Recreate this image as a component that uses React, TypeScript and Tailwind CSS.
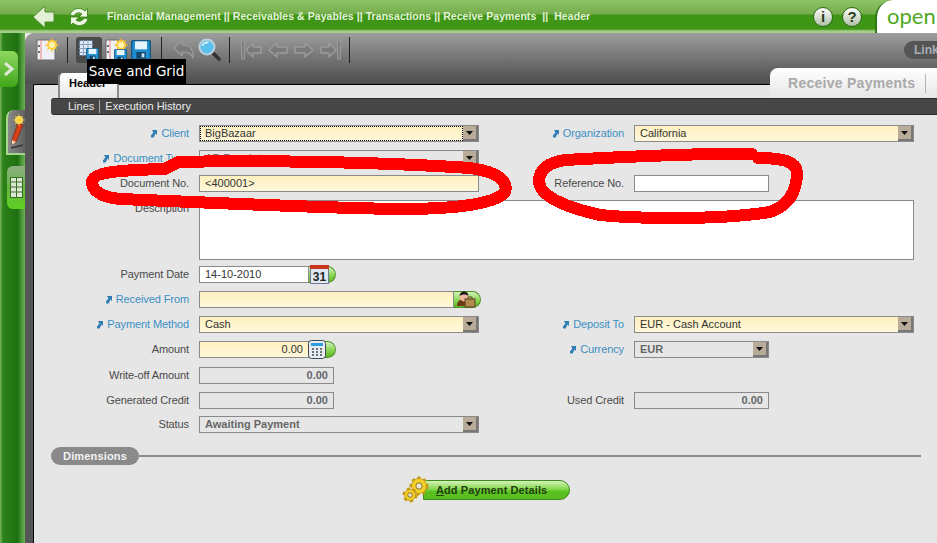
import React from "react";

const LinkMark = () => (
  <svg width="8" height="9" viewBox="0 0 8 9" className="mr-[3px] shrink-0">
    <path d="M2 1h5v5L5.6 4.6 3.6 8.4H1.2L0.9 6.6 3.4 3.4z" fill="#2f7fb5" />
  </svg>
);

const Label = ({ text, link, w }: { text: string; link?: boolean; w: string }) => (
  <div className={`${w} shrink-0 flex items-center justify-end h-[17px] text-[11px] tracking-[-0.1px] whitespace-nowrap ${link ? "text-[#3b8fc4]" : "text-[#4a4a4a]"}`}>
    {link && <LinkMark />}
    {text}
  </div>
);

const SelectBtn = () => (
  <span className="absolute right-0 top-0 bottom-0 w-[15px] flex items-center justify-center bg-[#b8ab98] border-r-2 border-b-2 border-[#777]">
    <svg width="7" height="4" viewBox="0 0 7 4"><path d="M0 0h7L3.5 4z" fill="#111" /></svg>
  </span>
);

const Field = ({ text, w, kind = "req", right, select, bold, focus }: { text?: string; w: string; kind?: "req" | "plain" | "ro"; right?: boolean; select?: boolean; bold?: boolean; focus?: boolean }) => (
  <div className={`relative ${w} h-[17px] shrink-0 border border-[#8a8a8a] flex items-center px-[5px] text-[11px] whitespace-nowrap overflow-hidden ${right ? "justify-end" : ""} ${kind === "req" ? "bg-gradient-to-b from-[#fff0c0] to-[#fff8da] text-[#333]" : kind === "plain" ? "bg-white text-[#333]" : "bg-[#e6e6e6] text-[#666]"} ${bold ? "font-bold" : ""}`}>
    <span>{text}</span>
    {focus && <span className="absolute left-0 top-0 bottom-0 right-[15px] border border-dotted border-black" />}
    {select && <SelectBtn />}
  </div>
);

const GreenPill = ({ children }: { children: React.ReactNode }) => (
  <div className="relative w-[27px] h-[17px] shrink-0 rounded-r-full bg-gradient-to-b from-[#d4f0b8] via-[#8ed85a] to-[#58b81c] border border-l-0 border-[#4f8f2a]">
    {children}
  </div>
);

const Row = ({ children, h = "h-[25px]" }: { children: React.ReactNode; h?: string }) => (
  <div className={`flex items-start ${h}`}>{children}</div>
);

const Arrow = ({ flip, bar }: { flip?: boolean; bar?: boolean }) => (
  <svg width="22" height="22" viewBox="0 0 22 22" style={{ transform: flip ? "scaleX(-1)" : undefined }}>
    {bar && <rect x="0.5" y="2" width="3" height="18" fill="#7f7f7f" stroke="#989898" />}
    <path d={bar ? "M5 11l7-7v4h8v6h-8v4z" : "M2 11l8-7v4h10v6H10v4z"} fill="#7a7a7a" stroke="#9c9c9c" strokeWidth="1.4" strokeLinejoin="round" />
  </svg>
);

const DocIcon = () => (
  <svg width="24" height="24" viewBox="0 0 24 24">
    <path d="M1 2h12l6 6v14H1z" fill="#eef0f6" stroke="#6a6a6a" />
    <path d="M5 2v20" stroke="#e88" />
    <circle cx="3" cy="8" r="0.9" fill="#333" /><circle cx="3" cy="14" r="0.9" fill="#333" />
    <circle cx="16" cy="7" r="5" fill="#ffd84a" />
    <path d="M16 0v14M9 7h14M11 2l10 10M21 2L11 12" stroke="#f5b81f" strokeWidth="1" />
    <circle cx="16" cy="7" r="3" fill="#fff3b0" />
  </svg>
);

const Disk = ({ size = 15 }: { size?: number }) => (
  <svg width={size} height={size} viewBox="0 0 15 15">
    <rect x="0.5" y="0.5" width="14" height="14" rx="1" fill="#1f8fd0" stroke="#16557f" />
    <rect x="3" y="1" width="9" height="6" fill="#e8f4fb" />
    <rect x="4" y="9" width="7" height="5" fill="#17486c" />
    <rect x="8" y="10" width="2" height="3" fill="#cfe6f5" />
  </svg>
);

const Sep = () => <div className="w-px h-[26px] bg-[#222] shrink-0" />;

const Gear = ({ x, y, r }: { x: number; y: number; r: number }) => (
  <g>
    <circle cx={x} cy={y} r={r} fill="#f2c81e" stroke="#c79a12" strokeWidth="4" strokeDasharray="3 2.6" />
    <circle cx={x} cy={y} r={r} fill="#f4cf2a" stroke="#a5830f" strokeWidth="0.6" />
    <circle cx={x} cy={y} r={r * 0.42} fill="#e9e4d0" stroke="#6f5a10" strokeWidth="0.8" />
  </g>
);

export default function App() {
  return (
    <div className="relative w-[937px] h-[543px] overflow-hidden flex flex-col bg-[#e6e6e6] font-['Liberation_Sans',Arial,sans-serif]">
      {/* Header */}
      <header className="relative h-[33px] shrink-0 flex items-center bg-[linear-gradient(#8fc466_0,#74ad4c_14px,#3f9516_15px,#3f9516_29px,#a6cf8c_31px,#a6cf8c_33px)]">
        <svg width="24" height="26" viewBox="0 0 24 26" className="ml-[32px] shrink-0">
          <path d="M1 13L13 2v6h9v10h-9v6z" fill="#e2f0d6" stroke="#4e8d2e" strokeWidth="1" strokeLinejoin="round" />
        </svg>
        <svg width="22" height="22" viewBox="0 0 22 22" className="ml-[12px] shrink-0">
          <path d="M2 9a9 9 0 0 1 15-4l2.5-2.5V11h-8.5l3-3A5 5 0 0 0 6 10z" fill="#eef7e6" stroke="#3f8a1e" strokeWidth="0.9" />
          <path d="M20 13a9 9 0 0 1-15 4l-2.5 2.5V11H11l-3 3a5 5 0 0 0 8-2z" fill="#eef7e6" stroke="#3f8a1e" strokeWidth="0.9" />
        </svg>
        <div className="ml-[17px] text-[10.5px] font-bold tracking-[0.06px] text-[#e4f2da] whitespace-pre">
          Financial Management || Receivables &amp; Payables || Transactions || Receive Payments  ||  Header
        </div>
        <div className="ml-auto flex items-center gap-[9px]">
          <div className="w-[20px] h-[20px] rounded-full bg-gradient-to-b from-white to-[#aebfa5] border border-[#2c6a12] flex items-center justify-center text-[15px] font-bold leading-none text-[#2a3a22]">i</div>
          <div className="w-[20px] h-[20px] rounded-full bg-gradient-to-b from-white to-[#aebfa5] border border-[#2c6a12] flex items-center justify-center text-[15px] font-bold leading-none text-[#2a3a22]">?</div>
        </div>
        <div className="ml-[13px] w-[62px] h-[33px] bg-white rounded-tl-[18px] border-l-2 border-[#2f7a14] pl-[10px] overflow-hidden whitespace-nowrap text-[22px] leading-[31px] text-[#4fa81f] font-['Lato',sans-serif]">
          open
        </div>
      </header>

      <div className="flex-1 flex min-h-0">
        {/* Left rail */}
        <aside className="w-[25px] shrink-0 flex flex-col items-start bg-[linear-gradient(to_right,#7cb562,#2d8218_3px,#1f7012_70%,#6cb352)]">
          <div className="mt-[18px] w-[18px] h-[36px] rounded-r-md bg-gradient-to-b from-[#8ed85e] to-[#3ea514] flex items-center justify-center">
            <svg width="12" height="14" viewBox="0 0 12 14"><path d="M2 1l7 6-7 6" fill="none" stroke="#dfe7d6" strokeWidth="3" /></svg>
          </div>
          <div className="mt-[23px] ml-[6px] w-[19px] h-[45px] rounded-tl-lg bg-gradient-to-r from-[#8a8a8a] to-[#5f5f5f] border-l-2 border-b-2 border-[#a7d78e] flex items-center justify-center">
            <svg width="16" height="36" viewBox="0 0 16 36">
              <path d="M9 9l5 2-7 17-4 3 0-5z" fill="#d8401a" stroke="#7a200a" strokeWidth="0.7" />
              <path d="M3 26l4 2-4 3z" fill="#eed9b0" />
              <path d="M2 34l12-3" stroke="#333" strokeWidth="1.6" />
              <circle cx="10" cy="6" r="4" fill="#ffe46a" />
              <path d="M10 0v12M4 6h12M6 2l8 8M14 2l-8 8" stroke="#f7c62b" strokeWidth="0.8" />
            </svg>
          </div>
          <div className="mt-[11px] ml-[7px] w-[18px] h-[43px] rounded-l-md bg-gradient-to-b from-[#8fae84] via-[#66b83c] to-[#5ed11f] flex items-center justify-center">
            <svg width="13" height="21" viewBox="0 0 13 21">
              <rect x="0.5" y="0.5" width="12" height="20" fill="#dbe9d2" stroke="#3a6a2a" />
              <path d="M0 5h13M0 10h13M0 15h13M6.5 0v21" stroke="#3a6a2a" />
            </svg>
          </div>
        </aside>

        {/* Main */}
        <main className="flex-1 min-w-0 flex flex-col bg-[#555] rounded-tl-[10px] overflow-hidden">
          <div className="h-[51px] shrink-0 flex items-center bg-gradient-to-b from-[#9e9e9e] to-[#4d4d4d] pb-[17px]">
            <div className="ml-[11px] shrink-0"><DocIcon /></div>
            <div className="ml-[7px]"><Sep /></div>
            <div className="relative ml-[8px] w-[26px] h-[26px] rounded-[3px] bg-[#4a4a4a] shrink-0">
              <svg width="14" height="16" viewBox="0 0 14 16" className="absolute left-[3px] top-[3px]">
                <rect x="0.5" y="0.5" width="13" height="15" fill="#dfe8f4" stroke="#5d6f8a" />
                <path d="M0 4.5h14M0 8.5h14M0 12.5h14M4.5 0v16M9 0v16" stroke="#8ca2c2" />
              </svg>
              <span className="absolute right-[3px] bottom-[2px] flex"><Disk size={13} /></span>
            </div>
            <div className="relative ml-[3px] w-[22px] h-[24px] shrink-0">
              <DocIcon />
              <span className="absolute right-0 bottom-0 flex"><Disk size={13} /></span>
            </div>
            <div className="ml-[4px] flex shrink-0"><Disk size={20} /></div>
            <div className="ml-[10px]"><Sep /></div>
            <svg width="22" height="20" viewBox="0 0 22 20" className="ml-[11px] shrink-0">
              <path d="M1 8l8-7v4c7 0 12 3 11 13-2-5-5-6-11-6v4z" fill="#7a7a7a" stroke="#9c9c9c" strokeWidth="1.2" strokeLinejoin="round" />
            </svg>
            <svg width="24" height="24" viewBox="0 0 24 24" className="ml-[3px] shrink-0">
              <path d="M14 14l7 7" stroke="#333" strokeWidth="3.6" strokeLinecap="round" />
              <circle cx="9" cy="9" r="7.5" fill="#5cc0ee" stroke="#bcd3de" strokeWidth="2" />
              <path d="M4.5 8a5 4 0 0 1 6-3.5" stroke="#e6f6fd" strokeWidth="1.6" fill="none" />
            </svg>
            <div className="ml-[7px]"><Sep /></div>
            <div className="ml-[11px] flex shrink-0"><Arrow bar /></div>
            <div className="ml-[4px] flex shrink-0"><Arrow /></div>
            <div className="ml-[4px] flex shrink-0"><Arrow flip /></div>
            <div className="ml-[4px] flex shrink-0"><Arrow flip bar /></div>
            <div className="ml-[8px]"><Sep /></div>
            <div className="ml-auto h-[18px] w-[34px] -mr-[1px] rounded-l-full bg-[#555] pl-[10px] text-[12px] font-bold leading-[18px] text-[#a8aeb8] overflow-hidden">Link</div>
          </div>

          <div className="flex-1 min-h-0 pl-[8px]">
            <div className="h-full bg-[#e6e6e6] border-l border-t border-black rounded-tl-[2px] flex flex-col">
              {/* Tab strip */}
              <div className="h-[13px] shrink-0 flex items-end">
                <div className="relative ml-[24px] h-[25px] w-[61px] bg-gradient-to-b from-white to-[#e6e6e6] border-x-2 border-[#8c8c8c] rounded-tl-[5px] pl-[9px] pt-[2px] text-[11px] font-bold text-black">Header</div>
                <div className="relative ml-auto h-[30px] w-[167px] bg-gradient-to-b from-white to-[#e6e6e6] rounded-tl-[8px] flex items-center">
                  <span className="ml-[18px] text-[14px] font-bold text-[#a9a9a9] tracking-[0.27px] whitespace-nowrap">Receive Payments</span>
                  <span className="ml-[10px] w-px h-[19px] bg-[#b5b5b5]" />
                </div>
              </div>

              {/* Sub tabs */}
              <div className="ml-[17px] h-[17px] shrink-0 rounded-l-[3px] bg-[#464646] border-y border-[#2c2c2c] flex items-center text-[11px] text-[#ececec]">
                <span className="ml-[17px]">Lines</span>
                <span className="ml-[5px] w-px h-[13px] bg-[#aaa]" />
                <span className="ml-[5px]">Execution History</span>
              </div>

              {/* Form */}
              <div className="pt-[10px] flex flex-col">
                <Row>
                  <Label text="Client" link w="w-[155px]" />
                  <div className="ml-[10px]"><Field text="BigBazaar" w="w-[280px]" select focus /></div>
                  <Label text="Organization" link w="w-[145px]" />
                  <div className="ml-[10px]"><Field text="California" w="w-[280px]" select /></div>
                </Row>
                <Row>
                  <Label text="Document Type" link w="w-[155px]" />
                  <div className="ml-[10px]"><Field text="AR Receipt" w="w-[280px]" kind="ro" select /></div>
                </Row>
                <Row>
                  <Label text="Document No." w="w-[155px]" />
                  <div className="ml-[10px]"><Field text="<400001>" w="w-[280px]" /></div>
                  <Label text="Reference No." w="w-[145px]" />
                  <div className="ml-[10px]"><Field w="w-[135px]" kind="plain" /></div>
                </Row>
                <Row h="h-[66px]">
                  <Label text="Description" w="w-[155px]" />
                  <div className="ml-[10px] w-[715px] h-[60px] bg-white border border-[#8a8a8a]" />
                </Row>
                <Row>
                  <Label text="Payment Date" w="w-[155px]" />
                  <div className="ml-[10px] flex">
                    <Field text="14-10-2010" w="w-[110px]" kind="plain" />
                    <GreenPill>
                      <svg width="19" height="20" viewBox="0 0 19 20" className="absolute left-[1px] -top-[2px]">
                        <rect x="0.5" y="0.5" width="18" height="18" fill="#dfe7f2" stroke="#6d7c90" />
                        <rect x="0" y="0" width="19" height="4" fill="#c8341c" />
                        <text x="9.5" y="15.5" textAnchor="middle" fontSize="12" fontWeight="700" fontFamily="Liberation Sans" fill="#222">31</text>
                      </svg>
                    </GreenPill>
                  </div>
                </Row>
                <Row>
                  <Label text="Received From" link w="w-[155px]" />
                  <div className="ml-[10px] flex">
                    <Field w="w-[255px]" />
                    <GreenPill>
                      <svg width="20" height="17" viewBox="0 0 20 17" className="absolute left-[2px] -top-[1px]">
                        <path d="M1 15c0-5 3-7 7-7s6 2 6 7z" fill="#6a3c14" />
                        <circle cx="8" cy="6" r="4.4" fill="#f0b7a0" />
                        <path d="M3.5 5a4.5 4.5 0 0 1 9 0c-2-2-6-2-9 0z" fill="#1c1c1c" />
                        <rect x="9" y="8" width="10" height="8" fill="#b08a4e" stroke="#5c4320" />
                        <path d="M12 8V6h4v2" fill="none" stroke="#5c4320" />
                      </svg>
                    </GreenPill>
                  </div>
                </Row>
                <Row>
                  <Label text="Payment Method" link w="w-[155px]" />
                  <div className="ml-[10px]"><Field text="Cash" w="w-[280px]" select /></div>
                  <Label text="Deposit To" link w="w-[145px]" />
                  <div className="ml-[10px]"><Field text="EUR - Cash Account" w="w-[280px]" select /></div>
                </Row>
                <Row h="h-[26px]">
                  <Label text="Amount" w="w-[155px]" />
                  <div className="ml-[10px] flex">
                    <Field text="0.00" w="w-[110px]" right />
                    <GreenPill>
                      <svg width="18" height="19" viewBox="0 0 18 19" className="absolute -left-[1px] -top-[2px]">
                        <rect x="0.5" y="0.5" width="17" height="18" rx="3" fill="#e8ecf0" stroke="#3d4a58" />
                        <rect x="3" y="3" width="12" height="3" fill="#2d9be0" />
                        <path d="M4 9h2M8 9h2M12 9h2M4 12h2M8 12h2M12 12h2M4 15h2M8 15h2M12 15h2" stroke="#3d4a58" strokeWidth="1.6" />
                      </svg>
                    </GreenPill>
                  </div>
                  <Label text="Currency" link w="w-[288px]" />
                  <div className="ml-[10px]"><Field text="EUR" w="w-[135px]" kind="ro" bold select /></div>
                </Row>
                <Row>
                  <Label text="Write-off Amount" w="w-[155px]" />
                  <div className="ml-[10px]"><Field text="0.00" w="w-[135px]" kind="ro" right bold /></div>
                </Row>
                <Row h="h-[24px]">
                  <Label text="Generated Credit" w="w-[155px]" />
                  <div className="ml-[10px]"><Field text="0.00" w="w-[135px]" kind="ro" right bold /></div>
                  <Label text="Used Credit" w="w-[290px]" />
                  <div className="ml-[10px]"><Field text="0.00" w="w-[135px]" kind="ro" right bold /></div>
                </Row>
                <Row>
                  <Label text="Status" w="w-[155px]" />
                  <div className="ml-[10px]"><Field text="Awaiting Payment" w="w-[280px]" kind="ro" bold select /></div>
                </Row>
              </div>

              {/* Dimensions */}
              <div className="mt-[6px] ml-[17px] mr-[16px] flex items-center">
                <div className="w-[88px] h-[18px] rounded-full bg-[#8a8a8a] text-center text-[11px] leading-[18px] font-bold tracking-[0.15px] text-[#f2f2f2]">Dimensions</div>
                <div className="flex-1 h-[2px] bg-[#8c8c8c]" />
              </div>

              {/* Button */}
              <div className="mt-[11px] ml-[368px] flex items-center">
                <svg width="30" height="27" viewBox="0 0 30 27" className="relative z-10 shrink-0">
                  <Gear x={17} y={10} r={7.5} />
                  <Gear x={8} y={19} r={5.5} />
                </svg>
                <div className="-ml-[9px] w-[147px] h-[20px] rounded-r-full border border-[#3f8a1e] bg-[linear-gradient(#d4f2b8,#86d84e_45%,#58c020_60%,#5dbd22)] pl-[12px] text-[11px] leading-[18px] font-bold tracking-[0.1px] text-[#21400f] whitespace-nowrap">
                  <span className="underline">A</span>dd Payment Details
                </div>
              </div>
            </div>
          </div>
        </main>
      </div>

      {/* Tooltip */}
      <div className="absolute left-[87px] top-[59px] h-[25px] w-[99px] bg-black text-white text-[13.5px] leading-[25px] text-center whitespace-nowrap font-['DejaVu_Sans',sans-serif]">Save and Grid</div>

      {/* Hand-drawn red marks */}
      <svg width="937" height="543" viewBox="0 0 937 543" className="absolute left-0 top-0 pointer-events-none" shapeRendering="crispEdges">
        <path d="M178 162C260 160 380 162 470 168C500 172 508 182 505 192C495 205 450 209 400 209C320 208 220 203 120 199C100 197 92 190 92 182C93 172 120 170 165 169Z" fill="none" stroke="#ff0000" strokeWidth="12" strokeLinejoin="round" />
        <path d="M752 154C700 153 620 157 565 160C545 163 539 172 539 182C540 195 560 206 600 215C640 219 720 220 770 212C790 205 797 190 797 172C796 162 785 158 758 158" fill="none" stroke="#ff0000" strokeWidth="12" strokeLinejoin="round" strokeLinecap="round" />
      </svg>
    </div>
  );
}
